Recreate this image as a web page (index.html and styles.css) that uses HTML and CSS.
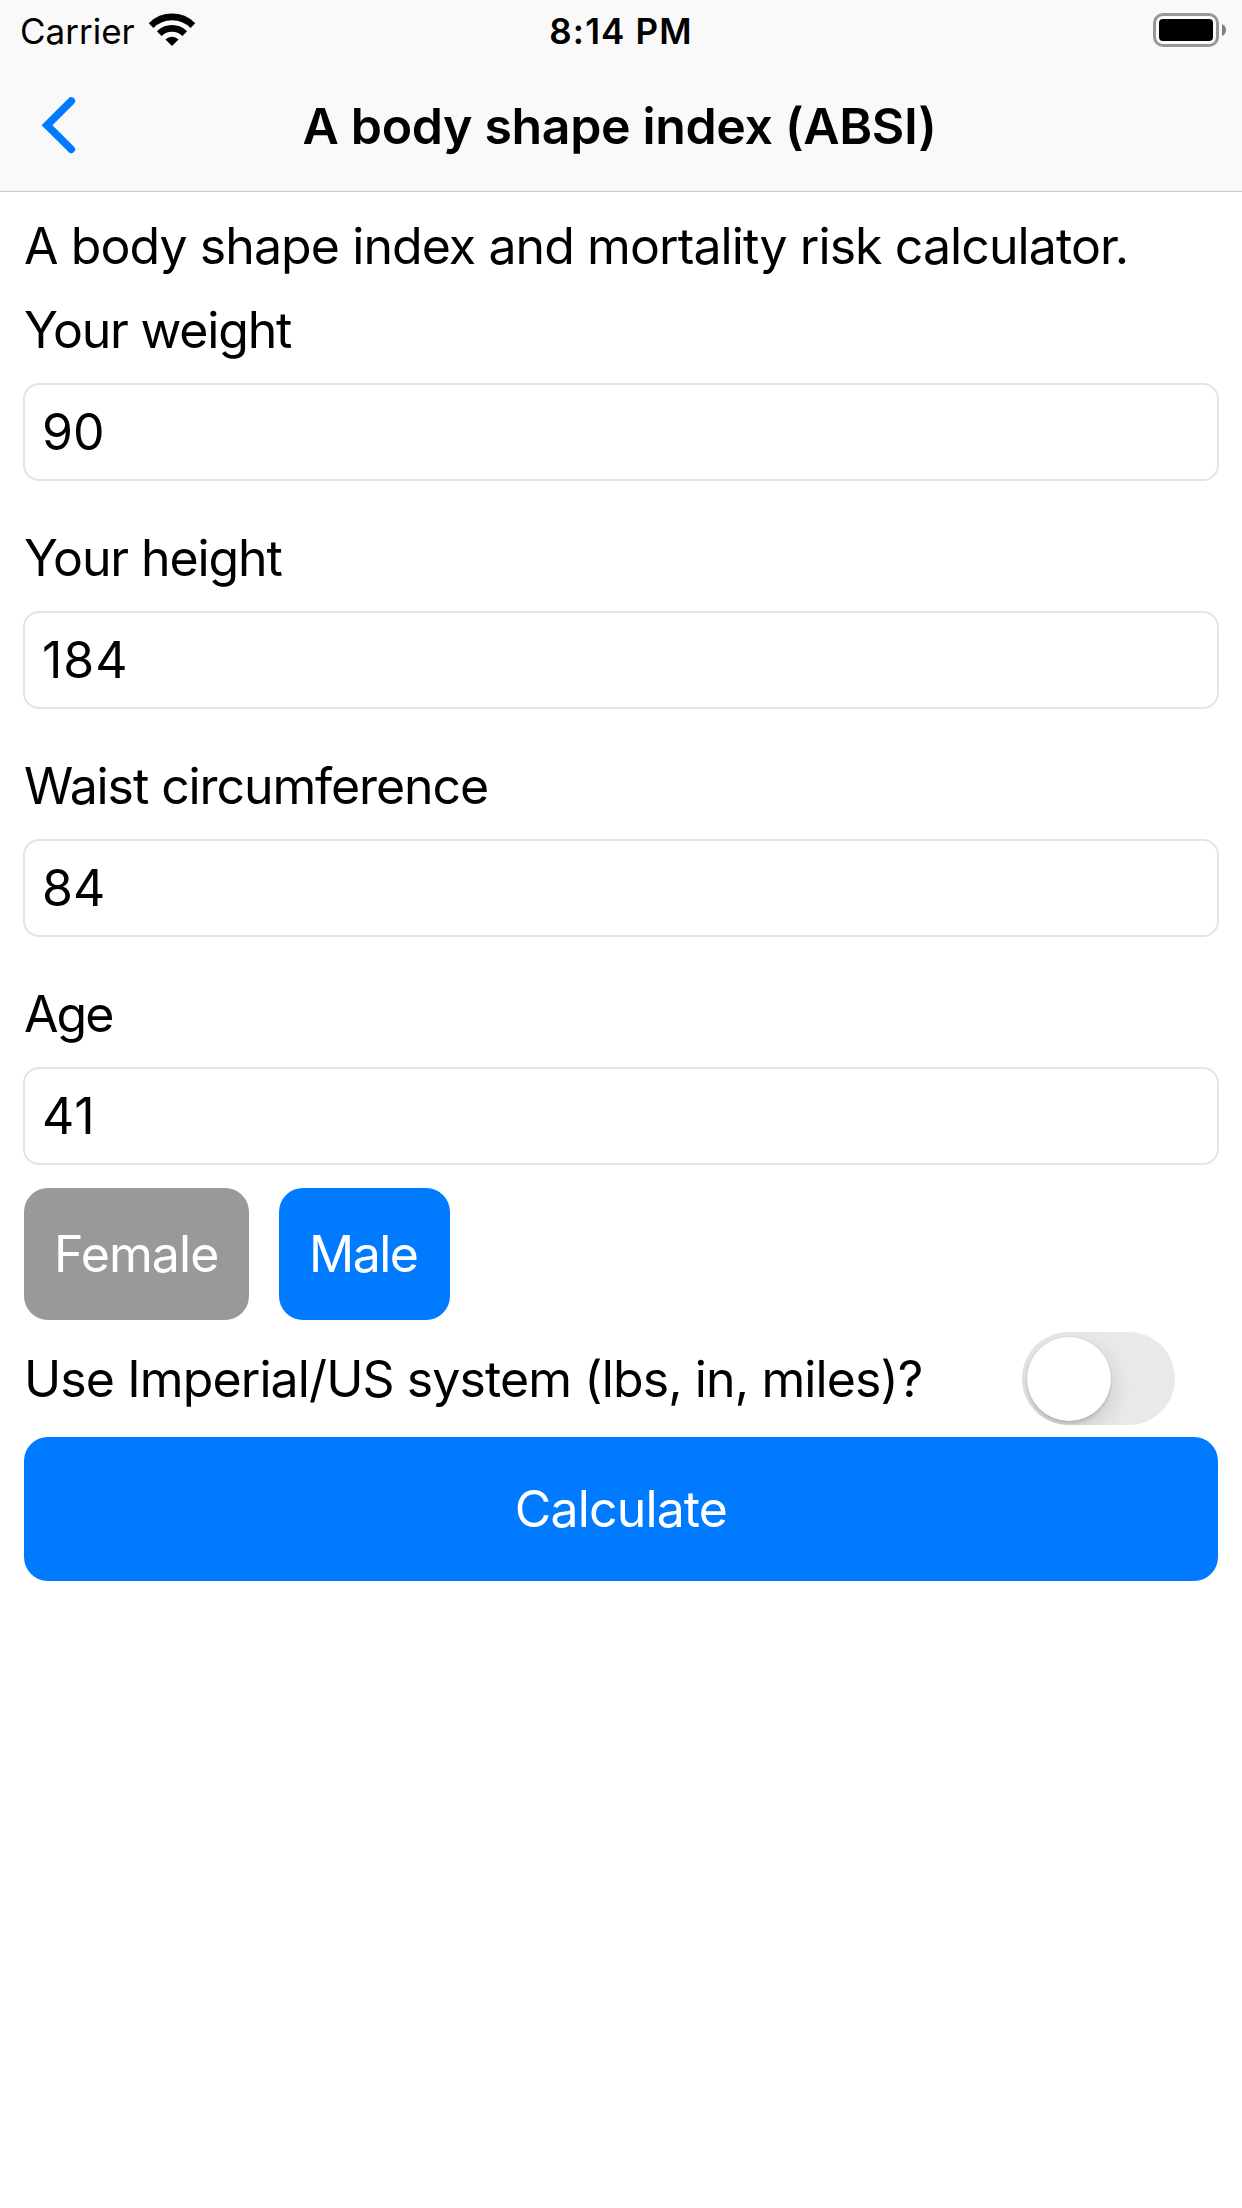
FILE: index.html
```
<!DOCTYPE html>
<html lang="en">
<head>
<meta charset="utf-8">
<title>A body shape index (ABSI)</title>
<link rel="stylesheet" href="styles.css">
</head>
<body>
<header class="header">
  <div class="status">
    <div class="status-left">
      <span class="carrier">Carrier</span>
      <svg class="wifi" width="46" height="34" viewBox="149 13 46 34" fill="none" stroke="#000">
        <path d="M151.1 25.6A29.5 29.5 0 0 1 192.9 25.6" stroke-width="6.8"/>
        <path d="M159.2 33.6A18.3 18.3 0 0 1 184.8 33.6" stroke-width="6.6"/>
        <path d="M165.4 39.4A9.6 9.6 0 0 1 178.6 39.4L172 46Z" fill="#000" stroke="none"/>
      </svg>
    </div>
    <span class="time">8:14 PM</span>
    <svg class="battery" width="74" height="34" viewBox="0 0 74 34">
      <rect x="1.5" y="1.5" width="63" height="31" rx="8.5" fill="#fff" fill-opacity=".4" stroke="#979797" stroke-width="3"/>
      <rect x="6" y="6" width="54" height="22" rx="4"/>
      <path d="M69 11Q73 13 73 17T69 23Z" fill="#808080"/>
    </svg>
  </div>
  <div class="navbar">
    <svg class="back" width="38" height="60" viewBox="39 95 38 60" fill="none" stroke="#007aff" stroke-width="7.6" stroke-linecap="round">
      <path d="M71.3 101L47 125.2L71.3 149.4"/>
    </svg>
    <h1 class="title">A body shape index (ABSI)</h1>
  </div>
</header>
<main class="form">
  <p class="intro">A body shape index and mortality risk calculator.</p>
  <div class="field">
    <label class="label label-weight" for="weight">Your weight</label>
    <input class="input" id="weight" value="90">
  </div>
  <div class="field">
    <label class="label" for="height">Your height</label>
    <input class="input input-height" id="height" value="184">
  </div>
  <div class="field">
    <label class="label" for="waist">Waist circumference</label>
    <input class="input" id="waist" value="84">
  </div>
  <div class="field">
    <label class="label label-age" for="age">Age</label>
    <input class="input input-age" id="age" value="41">
  </div>
  <div class="choices">
    <button class="choice female">Female</button>
    <button class="choice male">Male</button>
  </div>
  <div class="units">
    <span class="units-text">Use Imperial/US system (lbs, in, miles)?</span>
    <span class="toggle"><span class="knob"></span></span>
  </div>
  <button class="calculate">Calculate</button>
</main>
</body>
</html>
```
FILE: styles.css
```
* { box-sizing: border-box; }

body {
  margin: 0;
  min-height: 2208px;
  background: #fff;
  color: #000;
  font: 400 50px/60px Inter, "Liberation Sans", sans-serif;
}

button, input { font: inherit; margin: 0; }

.header {
  height: 192px;
  background: #f9f9f9;
  border-bottom: 1px solid #cbcbcb;
}

.status {
  display: grid;
  grid-template-columns: 1fr auto 1fr;
  align-items: start;
  height: 60px;
  padding: 0 15px 0 20px;
  line-height: 42px;
  font-size: 35px;
}

.status-left { display: flex; gap: 14px; }
.carrier { width: 115px; padding-top: 10px; white-space: nowrap; }
.wifi { margin-top: 13px; }
.time { padding: 10px 5px 0 0; font-weight: 600; letter-spacing: 1.16px; white-space: nowrap; }
.battery { margin-top: 13px; justify-self: end; }

.navbar {
  display: grid;
  grid-template-columns: 100px 1fr 100px;
  height: 131px;
}

.back { margin: 35px 0 0 39px; }

.title {
  margin: 36px 0 0;
  padding-right: 3px;
  font-size: 50px;
  font-weight: 600;
  letter-spacing: -0.34px;
  text-align: center;
  white-space: nowrap;
}

.form {
  display: flex;
  flex-direction: column;
  padding: 24px 24px 0;
}

.intro {
  margin: 0 0 24px;
  letter-spacing: -0.91px;
  white-space: nowrap;
}

.field {
  display: flex;
  flex-direction: column;
  gap: 23px;
  margin: 0 -1px 47px;
}

.label { padding-left: 1px; letter-spacing: -1.1px; }
.label-weight { letter-spacing: -1.2px; }
.label-age { letter-spacing: -2px; }

.input {
  width: 100%;
  height: 98px;
  padding: 0 17px;
  border: 2px solid #e4e4e4;
  border-radius: 16px;
  outline: 0;
  background: #fff;
  color: #000;
}

.input-height { letter-spacing: 1px; }
.input-age { letter-spacing: 1px; }

.choices {
  display: flex;
  gap: 30px;
  margin-top: -24px;
}

.choice {
  height: 132px;
  padding: 0 0 0 30px;
  border: 0;
  border-radius: 24px;
  color: #fff;
  text-align: left;
}

.female { width: 225px; background: #999; letter-spacing: -0.9px; }
.male { width: 171px; background: #007aff; letter-spacing: -1.5px; }

.units {
  display: flex;
  justify-content: space-between;
  align-items: center;
  height: 93px;
  margin: 12px 0;
  padding-right: 43px;
}

.units-text { letter-spacing: -0.89px; white-space: nowrap; padding-top: 1px; }

.toggle {
  width: 153px;
  height: 93px;
  padding: 4.5px;
  overflow: hidden;
  border-radius: 47px;
  background: #e9e9e9;
}

.knob {
  display: block;
  width: 84px;
  height: 84px;
  border-radius: 50%;
  background: #fff;
  box-shadow: 0 9px 24px rgba(0, 0, 0, .15), 0 3px 3px rgba(0, 0, 0, .1), 0 0 2px rgba(0, 0, 0, .1);
}

.calculate {
  height: 144px;
  border: 0;
  border-radius: 24px;
  background: #007aff;
  color: #fff;
  letter-spacing: -0.86px;
}
```
